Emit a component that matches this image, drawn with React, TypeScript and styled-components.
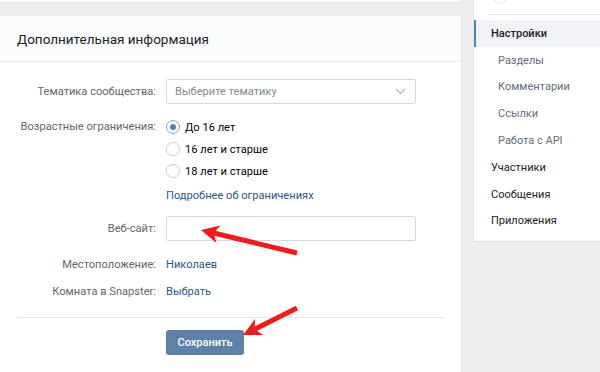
import styled, { createGlobalStyle } from 'styled-components';

const GlobalStyle = createGlobalStyle`
  html, body {
    margin: 0;
    padding: 0;
    background: #edeef0;
  }
  body {
    font-family: Roboto, "Open Sans", "Liberation Sans", sans-serif;
    -webkit-font-smoothing: antialiased;
  }
`;

const Page = styled.div`
  position: relative;
  width: 600px;
  height: 372px;
  overflow: hidden;
  background: #edeef0;
  display: flex;
  align-items: flex-start;
  gap: 11px;
`;

const MainColumn = styled.div`
  width: 462px;
  flex-shrink: 0;
  display: flex;
  flex-direction: column;
  gap: 12px;
`;

const PrevCard = styled.div`
  height: 2px;
  background: #fff;
  border-bottom: 1px solid #dfe1e6;
  border-right: 1px solid #e3e4e8;
`;

const Card = styled.div`
  background: #fff;
  border-right: 1px solid #e3e4e8;
  border-top: 1px solid #e7e8ec;
  height: 400px;
`;

const CardHeader = styled.div`
  height: 45px;
  display: flex;
  align-items: center;
  padding-left: 17px;
  background: #fafbfc;
  border-bottom: 1px solid #e7e8ec;
  font-size: 13.5px;
  color: #222;
`;

const Form = styled.div`
  padding: 17px 17px 0 0;
`;

const Row = styled.div<{ $top?: number }>`
  display: grid;
  grid-template-columns: 156px 250px;
  column-gap: 10px;
  margin-top: ${(p) => p.$top ?? 0}px;
  align-items: start;
`;

const Label = styled.div<{ $h?: number }>`
  text-align: right;
  color: #656565;
  font-size: 11.1px;
  line-height: ${(p) => p.$h ?? 20}px;
`;

const Field = styled.div`
  height: 23px;
  border: 1px solid #d3d9de;
  border-radius: 2px;
  display: flex;
  align-items: center;
  justify-content: space-between;
  padding: 0 9px 0 8px;
  font-size: 11.1px;
  color: #828a92;
`;

const Options = styled.div`
  display: flex;
  flex-direction: column;
`;

const Option = styled.div`
  height: 22px;
  display: flex;
  align-items: center;
  gap: 5px;
  font-size: 11.1px;
  color: #000;
`;

const Radio = styled.span<{ $on?: boolean }>`
  width: 12px;
  height: 12px;
  border-radius: 50%;
  border: 1px solid ${(p) => (p.$on ? '#8aa4c3' : '#c8ced6')};
  display: flex;
  align-items: center;
  justify-content: center;
  flex-shrink: 0;
  &::after {
    content: '';
    width: 6px;
    height: 6px;
    border-radius: 50%;
    background: ${(p) => (p.$on ? '#5181b8' : 'transparent')};
  }
`;

const LinkText = styled.div<{ $h?: number }>`
  color: #2a5885;
  font-size: 11.1px;
  line-height: ${(p) => p.$h ?? 20}px;
`;

const Separator = styled.div`
  margin: 15px 0 0 17px;
  height: 1px;
  background: #e7e8ec;
`;

const Button = styled.button`
  width: 78px;
  height: 25px;
  border: 0;
  border-radius: 3px;
  background: #5e81a8;
  color: #fff;
  font-family: inherit;
  font-size: 11px;
  font-weight: 500;
  padding: 0;
`;

const SideColumn = styled.div`
  width: 140px;
  flex-shrink: 0;
`;

const SideCard = styled.div`
  background: #fff;
  border-left: 1px solid #e3e4e8;
  border-bottom: 1px solid #dfe1e6;
  padding-bottom: 7px;
`;

const SideTop = styled.div`
  height: 14px;
  margin-left: 14px;
  border-bottom: 1px solid #e7e8ec;
  margin-bottom: 5px;
  position: relative;
  &::before {
    content: '';
    position: absolute;
    left: 6px;
    top: -6px;
    width: 10px;
    height: 8px;
    border-radius: 50%;
    border: 1px solid #e4e7eb;
  }
`;

const MenuItem = styled.div<{ $active?: boolean; $sub?: boolean }>`
  height: 26.8px;
  display: flex;
  align-items: center;
  font-size: 11px;
  border-left: 2px solid ${(p) => (p.$active ? '#5181b8' : 'transparent')};
  background: ${(p) => (p.$active ? '#f0f2f5' : 'transparent')};
  padding-left: ${(p) => (p.$sub ? 22 : 15)}px;
  color: ${(p) => (p.$sub ? '#626d7a' : '#222')};
  font-weight: ${(p) => (p.$active ? 500 : 400)};
`;

const Overlay = styled.svg`
  position: absolute;
  left: 0;
  top: 0;
  pointer-events: none;
`;

const Chevron = () => (
  <svg width="11" height="7" viewBox="0 0 11 7">
    <path d="M1 1l4.5 4.5L10 1" fill="none" stroke="#a9b2bc" strokeWidth="1.2" />
  </svg>
);

const Arrow = ({ x1, y1, x2, y2 }: { x1: number; y1: number; x2: number; y2: number }) => {
  const a = Math.atan2(y2 - y1, x2 - x1);
  const len = 18;
  const w = 9;
  const bx = x2 - Math.cos(a) * len;
  const by = y2 - Math.sin(a) * len;
  const px = -Math.sin(a) * w;
  const py = Math.cos(a) * w;
  const nx = bx + Math.cos(a) * 5;
  const ny = by + Math.sin(a) * 5;
  return (
    <g>
      <line x1={x1} y1={y1} x2={nx} y2={ny} stroke="#ee1c1c" strokeWidth="5" />
      <polygon
        points={`${x2},${y2} ${bx + px},${by + py} ${nx},${ny} ${bx - px},${by - py}`}
        fill="#ee1c1c"
      />
    </g>
  );
};

export default function App() {
  return (
    <>
      <GlobalStyle />
      <Page>
        <MainColumn>
          <PrevCard />
          <Card>
            <CardHeader>Дополнительная информация</CardHeader>
            <Form>
              <Row>
                <Label $h={25}>Тематика сообщества:</Label>
                <Field>
                  <span>Выберите тематику</span>
                  <Chevron />
                </Field>
              </Row>
              <Row $top={12}>
                <Label $h={22}>Возрастные ограничения:</Label>
                <Options>
                  <Option>
                    <Radio $on />
                    До 16 лет
                  </Option>
                  <Option>
                    <Radio />
                    16 лет и старше
                  </Option>
                  <Option>
                    <Radio />
                    18 лет и старше
                  </Option>
                  <LinkText $h={22} style={{ marginTop: 3 }}>
                    Подробнее об ограничениях
                  </LinkText>
                </Options>
              </Row>
              <Row $top={9}>
                <Label $h={25}>Веб-сайт:</Label>
                <Field />
              </Row>
              <Row $top={14}>
                <Label>Местоположение:</Label>
                <LinkText>Николаев</LinkText>
              </Row>
              <Row $top={7}>
                <Label>Комната в Snapster:</Label>
                <LinkText>Выбрать</LinkText>
              </Row>
              <Separator />
              <Row $top={12}>
                <div />
                <div>
                  <Button>Сохранить</Button>
                </div>
              </Row>
            </Form>
          </Card>
        </MainColumn>
        <SideColumn>
          <SideCard>
            <SideTop />
            <MenuItem $active>Настройки</MenuItem>
            <MenuItem $sub>Разделы</MenuItem>
            <MenuItem $sub>Комментарии</MenuItem>
            <MenuItem $sub>Ссылки</MenuItem>
            <MenuItem $sub>Работа с API</MenuItem>
            <MenuItem>Участники</MenuItem>
            <MenuItem>Сообщения</MenuItem>
            <MenuItem>Приложения</MenuItem>
          </SideCard>
        </SideColumn>
        <Overlay width="600" height="372">
          <Arrow x1={297} y1={253} x2={201} y2={230} />
          <Arrow x1={297} y1={308} x2={243} y2={335} />
        </Overlay>
      </Page>
    </>
  );
}
